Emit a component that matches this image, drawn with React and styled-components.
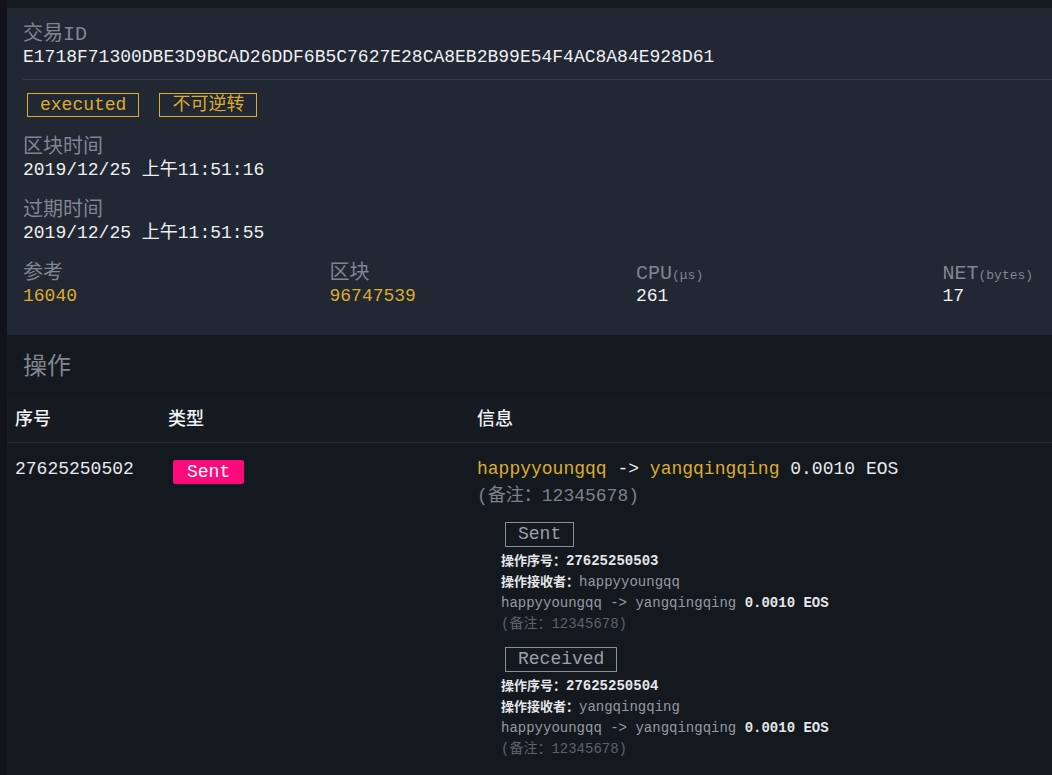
import React from "react";
import styled, { createGlobalStyle } from "styled-components";

const Global = createGlobalStyle`
  html, body { margin: 0; padding: 0; background: #10141a; overflow: hidden; }
  body {
    font-family: "Courier New", "Nimbus Mono PS", "Nimbus Mono L", "FreeMono", "Liberation Mono", "Noto Sans CJK SC", monospace;
    color: #e8eaed;
  }
`;

const YELLOW = "#dcad2c";
const GRAY = "#80868f";

const Page = styled.div`
  margin-left: 7px;
  padding-top: 8px;
  min-height: 775px;
  background: #141920;
  box-sizing: border-box;
`;

const Panel = styled.section`
  background: #212733;
  padding: 12px 0 27px 16px;
`;

const Label = styled.div`
  height: 24px;
  padding-top: 3px;
  font-size: 20px;
  line-height: 24px;
  color: ${GRAY};
  white-space: nowrap;
`;

const Small = styled.span`
  font-size: 13px;
`;

const Value = styled.div`
  height: 24px;
  margin-top: -2px;
  font-size: 18px;
  line-height: 24px;
  color: ${(p) => (p.$accent ? YELLOW : "#eef0f2")};
  white-space: nowrap;
`;

const Divider = styled.hr`
  border: 0;
  border-top: 1px solid #363c48;
  margin: 10px 0 13px;
`;

const Tags = styled.div`
  display: flex;
  gap: 20px;
  padding-left: 4px;
`;

const Tag = styled.span`
  display: inline-block;
  box-sizing: border-box;
  height: 24px;
  line-height: 22px;
  padding: 0 12px;
  border: 1px solid ${YELLOW};
  color: ${YELLOW};
  font-size: 18px;
`;

const Field = styled.div`
  margin-top: ${(p) => p.$gap || 14}px;
`;

const Stats = styled.div`
  display: grid;
  grid-template-columns: 306.5px 306.5px 306.5px auto;
  margin-top: 14px;
`;

const SectionTitle = styled.h2`
  margin: 18px 0 15px 16px;
  font-size: 24px;
  line-height: 30px;
  font-weight: normal;
  color: ${GRAY};
`;

const Row = styled.div`
  display: grid;
  grid-template-columns: 153px 309px 1fr;
  padding-left: 8px;
`;

const HeadRow = styled(Row)`
  height: 44px;
  align-items: center;
  line-height: 24px;
  background: #161b22;
  border-bottom: 1px solid #232a32;
  font-size: 18px;
  font-weight: 500;
  color: #f2f3f5;
`;

const BodyRow = styled(Row)`
  padding-top: 13px;
  font-size: 18px;
  line-height: 27px;
`;

const Badge = styled.span`
  display: inline-block;
  margin: 4px 0 0 5px;
  height: 24px;
  line-height: 24px;
  padding: 0 14px;
  background: #fa0a7a;
  border-radius: 2px;
  color: #fff;
  font-size: 18px;
`;

const Acc = styled.span`
  color: ${YELLOW};
`;

const Memo = styled.div`
  color: ${(p) => (p.$dim ? "#5c626b" : "#7c828b")};
  white-space: nowrap;
`;

const Inline = styled.div`
  white-space: nowrap;
`;

const Sub = styled.div`
  margin-top: 12px;
  padding-left: 24px;
  font-size: 14px;
  line-height: 21px;
`;

const SubTag = styled.span`
  display: inline-block;
  box-sizing: border-box;
  margin: 0 0 4px 4px;
  height: 25px;
  line-height: 23px;
  padding: 0 12px;
  border: 1px solid #8a9099;
  color: #9aa0a8;
  font-size: 18px;
`;

const SubLine = styled.div`
  color: #9499a1;
  white-space: nowrap;
`;

const Key = styled.span`
  font-size: 13px;
  font-weight: bold;
  color: #e4e6e9;
`;

const Strong = styled.span`
  font-weight: bold;
  color: #e4e6e9;
`;

const actions = [
  { type: "Sent", seq: "27625250503", recv: "happyyoungqq" },
  { type: "Received", seq: "27625250504", recv: "yangqingqing" },
];

export default function App() {
  return (
    <>
      <Global />
      <Page>
        <Panel>
          <Label>交易ID</Label>
          <Value>E1718F71300DBE3D9BCAD26DDF6B5C7627E28CA8EB2B99E54F4AC8A84E928D61</Value>
          <Divider />
          <Tags>
            <Tag>executed</Tag>
            <Tag>不可逆转</Tag>
          </Tags>
          <Field $gap={16}>
            <Label>区块时间</Label>
            <Value>2019/12/25 上午11:51:16</Value>
          </Field>
          <Field>
            <Label>过期时间</Label>
            <Value>2019/12/25 上午11:51:55</Value>
          </Field>
          <Stats>
            <div>
              <Label>参考</Label>
              <Value $accent>16040</Value>
            </div>
            <div>
              <Label>区块</Label>
              <Value $accent>96747539</Value>
            </div>
            <div>
              <Label>CPU<Small>(μs)</Small></Label>
              <Value>261</Value>
            </div>
            <div>
              <Label>NET<Small>(bytes)</Small></Label>
              <Value>17</Value>
            </div>
          </Stats>
        </Panel>

        <SectionTitle>操作</SectionTitle>
        <HeadRow>
          <div>序号</div>
          <div>类型</div>
          <div>信息</div>
        </HeadRow>
        <BodyRow>
          <div>27625250502</div>
          <div><Badge>Sent</Badge></div>
          <div>
            <Inline>
              <Acc>happyyoungqq</Acc> -&gt; <Acc>yangqingqing</Acc> 0.0010 EOS
            </Inline>
            <Memo>(备注：12345678)</Memo>
            {actions.map((a) => (
              <Sub key={a.seq}>
                <SubTag>{a.type}</SubTag>
                <SubLine><Key>操作序号：</Key><Strong>{a.seq}</Strong></SubLine>
                <SubLine><Key>操作接收者：</Key>{a.recv}</SubLine>
                <SubLine>happyyoungqq -&gt; yangqingqing <Strong>0.0010 EOS</Strong></SubLine>
                <Memo $dim>(备注：12345678)</Memo>
              </Sub>
            ))}
          </div>
        </BodyRow>
      </Page>
    </>
  );
}
